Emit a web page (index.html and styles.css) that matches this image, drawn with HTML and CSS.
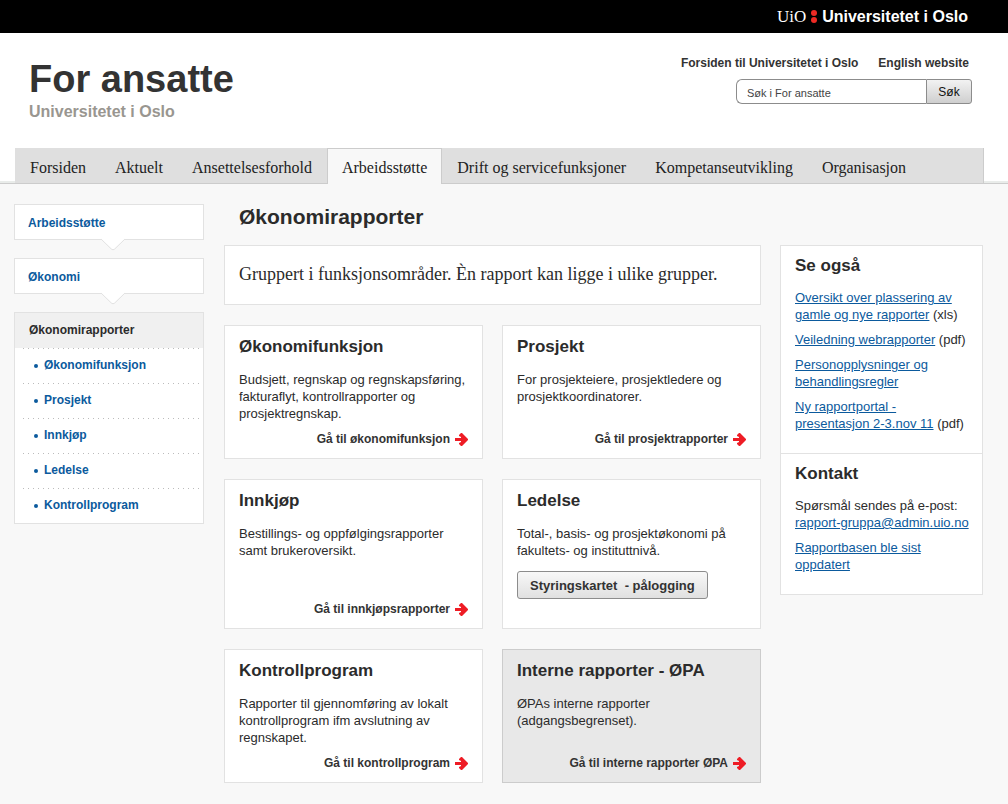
FILE: index.html
```html
<!DOCTYPE html>
<html lang="no">
<head>
<meta charset="utf-8">
<title>Økonomirapporter - For ansatte</title>
<link rel="stylesheet" href="styles.css">
</head>
<body>
<div class="topbar">
  <a class="logo" href="#"><span class="logo-short">UiO</span><svg class="logo-dots" viewBox="0 0 6 13" width="6" height="13" aria-hidden="true"><circle cx="3" cy="3" r="3"/><circle cx="3" cy="10" r="3"/></svg><span class="logo-name">Universitetet i Oslo</span></a>
</div>
<header class="header">
  <div class="brand">
    <a class="brand-title" href="#">For ansatte</a>
    <a class="brand-sub" href="#">Universitetet i Oslo</a>
  </div>
  <div class="tools">
    <div class="tool-links"><a href="#">Forsiden til Universitetet i Oslo</a><a href="#">English website</a></div>
    <form class="search">
      <input class="search-field" type="text" placeholder="Søk i For ansatte" aria-label="Søk i For ansatte">
      <button class="search-button" type="submit">Søk</button>
    </form>
  </div>
</header>
<div class="nav-band">
  <nav class="nav">
    <a href="#">Forsiden</a>
    <a href="#">Aktuelt</a>
    <a href="#">Ansettelsesforhold</a>
    <a class="active" href="#">Arbeidsstøtte</a>
    <a href="#">Drift og servicefunksjoner</a>
    <a href="#">Kompetanseutvikling</a>
    <a href="#">Organisasjon</a>
  </nav>
</div>
<div class="page">
  <nav class="side">
    <a class="crumb" href="#">Arbeidsstøtte<svg class="notch" viewBox="0 0 26 13" width="26" height="13" aria-hidden="true"><path class="notch-fill" d="M0 0H26L14 11Q13 12 12 11L1 1Z"/><path class="notch-line" d="M1 1L11.500 11.200Q13 12.300 14.500 11.200L25 1"/></svg></a>
    <a class="crumb" href="#">Økonomi<svg class="notch" viewBox="0 0 26 13" width="26" height="13" aria-hidden="true"><path class="notch-fill" d="M0 0H26L14 11Q13 12 12 11L1 1Z"/><path class="notch-line" d="M1 1L11.500 11.200Q13 12.300 14.500 11.200L25 1"/></svg></a>
    <div class="menu">
      <div class="menu-head">Økonomirapporter</div>
      <ul class="menu-list">
        <li><a href="#">Økonomifunksjon</a></li>
        <li><a href="#">Prosjekt</a></li>
        <li><a href="#">Innkjøp</a></li>
        <li><a href="#">Ledelse</a></li>
        <li><a href="#">Kontrollprogram</a></li>
      </ul>
    </div>
  </nav>
  <main class="main">
    <h1 class="title">Økonomirapporter</h1>
    <p class="intro">Gruppert i funksjonsområder. Èn rapport kan ligge i ulike grupper.</p>
    <div class="cards">
      <section class="card">
        <h2>Økonomifunksjon</h2>
        <p>Budsjett, regnskap og regnskapsføring, fakturaflyt, kontrollrapporter og prosjektregnskap.</p>
        <a class="more" href="#">Gå til økonomifunksjon<svg class="arrow" viewBox="0 0 13 13" width="13" height="13" aria-hidden="true"><path d="M0 5H6V4L4 3V2L6 0H7L13 6V7L7 13H6L4 11V10L6 9V8H0Z"/></svg></a>
      </section>
      <section class="card">
        <h2>Prosjekt</h2>
        <p>For prosjekteiere, prosjektledere og prosjektkoordinatorer.</p>
        <a class="more" href="#">Gå til prosjektrapporter<svg class="arrow" viewBox="0 0 13 13" width="13" height="13" aria-hidden="true"><path d="M0 5H6V4L4 3V2L6 0H7L13 6V7L7 13H6L4 11V10L6 9V8H0Z"/></svg></a>
      </section>
      <section class="card">
        <h2>Innkjøp</h2>
        <p>Bestillings- og oppfølgingsrapporter samt brukeroversikt.</p>
        <a class="more" href="#">Gå til innkjøpsrapporter<svg class="arrow" viewBox="0 0 13 13" width="13" height="13" aria-hidden="true"><path d="M0 5H6V4L4 3V2L6 0H7L13 6V7L7 13H6L4 11V10L6 9V8H0Z"/></svg></a>
      </section>
      <section class="card">
        <h2>Ledelse</h2>
        <p>Total-, basis- og prosjektøkonomi på fakultets- og instituttnivå.</p>
        <button class="login" type="button">Styringskartet &nbsp;- pålogging</button>
      </section>
      <section class="card">
        <h2>Kontrollprogram</h2>
        <p>Rapporter til gjennomføring av lokalt kontrollprogram ifm avslutning av regnskapet.</p>
        <a class="more" href="#">Gå til kontrollprogram<svg class="arrow" viewBox="0 0 13 13" width="13" height="13" aria-hidden="true"><path d="M0 5H6V4L4 3V2L6 0H7L13 6V7L7 13H6L4 11V10L6 9V8H0Z"/></svg></a>
      </section>
      <section class="card card-internal">
        <h2>Interne rapporter - ØPA</h2>
        <p>ØPAs interne rapporter (adgangsbegrenset).</p>
        <a class="more" href="#">Gå til interne rapporter ØPA<svg class="arrow" viewBox="0 0 13 13" width="13" height="13" aria-hidden="true"><path d="M0 5H6V4L4 3V2L6 0H7L13 6V7L7 13H6L4 11V10L6 9V8H0Z"/></svg></a>
      </section>
    </div>
  </main>
  <aside class="related">
    <section>
      <h2>Se også</h2>
      <p><a href="#">Oversikt over plassering av gamle og nye rapporter</a> (xls)</p>
      <p><a href="#">Veiledning webrapporter</a> (pdf)</p>
      <p><a href="#">Personopplysninger og behandlingsregler</a></p>
      <p><a href="#">Ny rapportportal - presentasjon 2-3.nov 11</a> (pdf)</p>
    </section>
    <section>
      <h2>Kontakt</h2>
      <p>Spørsmål sendes på e-post: <a class="email" href="#">rapport-gruppa@admin.uio.no</a></p>
      <p><a href="#">Rapportbasen ble sist<br>oppdatert</a></p>
    </section>
  </aside>
</div>
</body>
</html>
```
FILE: styles.css
```css
* { box-sizing: border-box; }
body {
  margin: 0;
  background: #f8f8f8;
  color: #2b2b2b;
  font: 13px/17px "Liberation Sans", Arial, sans-serif;
}
a { color: inherit; text-decoration: none; }
h1, h2, p, ul { margin: 0; padding: 0; }

.topbar { display: flex; justify-content: flex-end; height: 33px; padding-right: 40px; background: #000; }
.logo { display: flex; align-items: center; color: #fff; font-size: 16px; font-weight: bold; }
.logo-short { font: 17px "Liberation Serif", serif; }
.logo-dots { margin: 0 5px; fill: #ee2a24; }

.header { display: flex; justify-content: space-between; padding: 22px 36px 0 29px; height: 115px; background: #fff; }
.brand { display: flex; flex-direction: column; }
.brand-title { color: #333; font-size: 38px; font-weight: bold; line-height: 48px; }
.brand-sub { color: #999690; font-size: 16px; font-weight: bold; line-height: 18px; }
.tools { display: flex; flex-direction: column; align-items: flex-end; gap: 7px; }
.tool-links { display: flex; gap: 20px; padding-right: 3px; font-size: 12px; font-weight: bold; color: #333; }
.search { display: flex; }
.search-field { width: 190px; height: 25px; padding: 2px 10px 0; border: 1px solid #8c8c8c; border-right: 0; border-radius: 6px 0 0 6px; background: #fff; color: #444; font: 11px "Liberation Sans", Arial, sans-serif; }
.search-field::placeholder { color: #444; opacity: 1; }
.search-button { width: 46px; height: 25px; padding: 0; border: 1px solid #8c8c8c; border-radius: 0 3px 3px 0; background: linear-gradient(#f2f2f2, #cfcfcf); color: #111; font: 12px "Liberation Sans", Arial, sans-serif; }

.nav-band { padding: 0 24px 0 15px; background: linear-gradient(#fff 33px, #e9ecea 33px, #e9ecea 35px, #ccc 35px); }
.nav { display: flex; gap: 1px; height: 36px; background: #dfdfdf; border-right: 1px solid #ccc; border-bottom: 1px solid #ccc; font: 16px/39px "Liberation Serif", Georgia, serif; color: #222; }
.nav a { padding: 0 14px; }
.nav a:first-child { padding-left: 15px; }
.nav .active { height: 36px; background: #f8f8f8; border: 1px solid #ccc; border-bottom: 0; line-height: 37px; }

.page { display: grid; grid-template-columns: 190px 1fr 203px; align-items: start; padding: 20px 25px 21px 14px; }
.side { display: flex; flex-direction: column; gap: 18px; color: #0b5a9d; font-size: 12px; font-weight: bold; }
.crumb { position: relative; padding: 10px 13px 8px; border: 1px solid #e2e2e2; background: #fff; line-height: 16px; }
.notch { position: absolute; left: 85px; top: 33px; }
.notch-fill { fill: #fff; }
.notch-line { fill: none; stroke: #e2e2e2; }
.menu { border: 1px solid #e2e2e2; background: #fff; }
.menu-head { padding: 0 14px; background: #f0f0f0; color: #2b2b2b; line-height: 35px; }
.menu-list { padding-left: 8px; padding-right: 4px; list-style: none; }
.menu-list li { display: flex; align-items: center; gap: 6px; height: 35px; padding-left: 11px; background: repeating-linear-gradient(90deg, #bbb 0 1px, transparent 1px 5px) top / 100% 1px no-repeat; }
.menu-list li::before { content: ""; width: 4px; height: 4px; border-radius: 2px; background: #0b5a9d; }

.main { margin: 0 19px 0 20px; }
.title { padding: 0 15px; font-size: 21px; line-height: 26px; }
.intro { margin: 15px 0 20px; padding: 15px 14px 17px; border: 1px solid #e2e2e2; background: #fff; font: 18px/26px "Liberation Serif", Georgia, serif; }
.cards { display: grid; grid-template-columns: 1fr 1fr; gap: 20px 19px; }
.card { display: flex; flex-direction: column; align-items: flex-start; padding: 11px 14px 10px; border: 1px solid #e2e2e2; background: #fff; }
.card-internal { border-color: #ccc; background: #e8e8e8; }
.card h2, .related h2 { font-size: 17px; line-height: 20px; }
.card h2 { margin-bottom: 14px; }
.more { display: flex; align-items: center; align-self: flex-end; gap: 5px; margin-top: auto; padding-top: 9px; font-size: 12px; font-weight: bold; color: #333; }
.arrow { fill: #ee1c25; }
.login { height: 28px; margin: 12px 0 19px; padding: 0 12px; border: 1px solid #8c8c8c; border-radius: 3px; background: linear-gradient(#f8f8f8, #e0e0e0); color: #333; font: bold 13px "Liberation Sans", Arial, sans-serif; }

.related { margin-top: 41px; border: 1px solid #e2e2e2; background: #fff; }
.related section { padding: 10px 12px 21px 14px; }
.related section + section { border-top: 1px solid #e2e2e2; }
.related h2 { margin-bottom: 13px; }
.related p + p { margin-top: 8px; }
.related a { color: #0b5a9d; text-decoration: underline; }
.related .email { white-space: nowrap; }
```
